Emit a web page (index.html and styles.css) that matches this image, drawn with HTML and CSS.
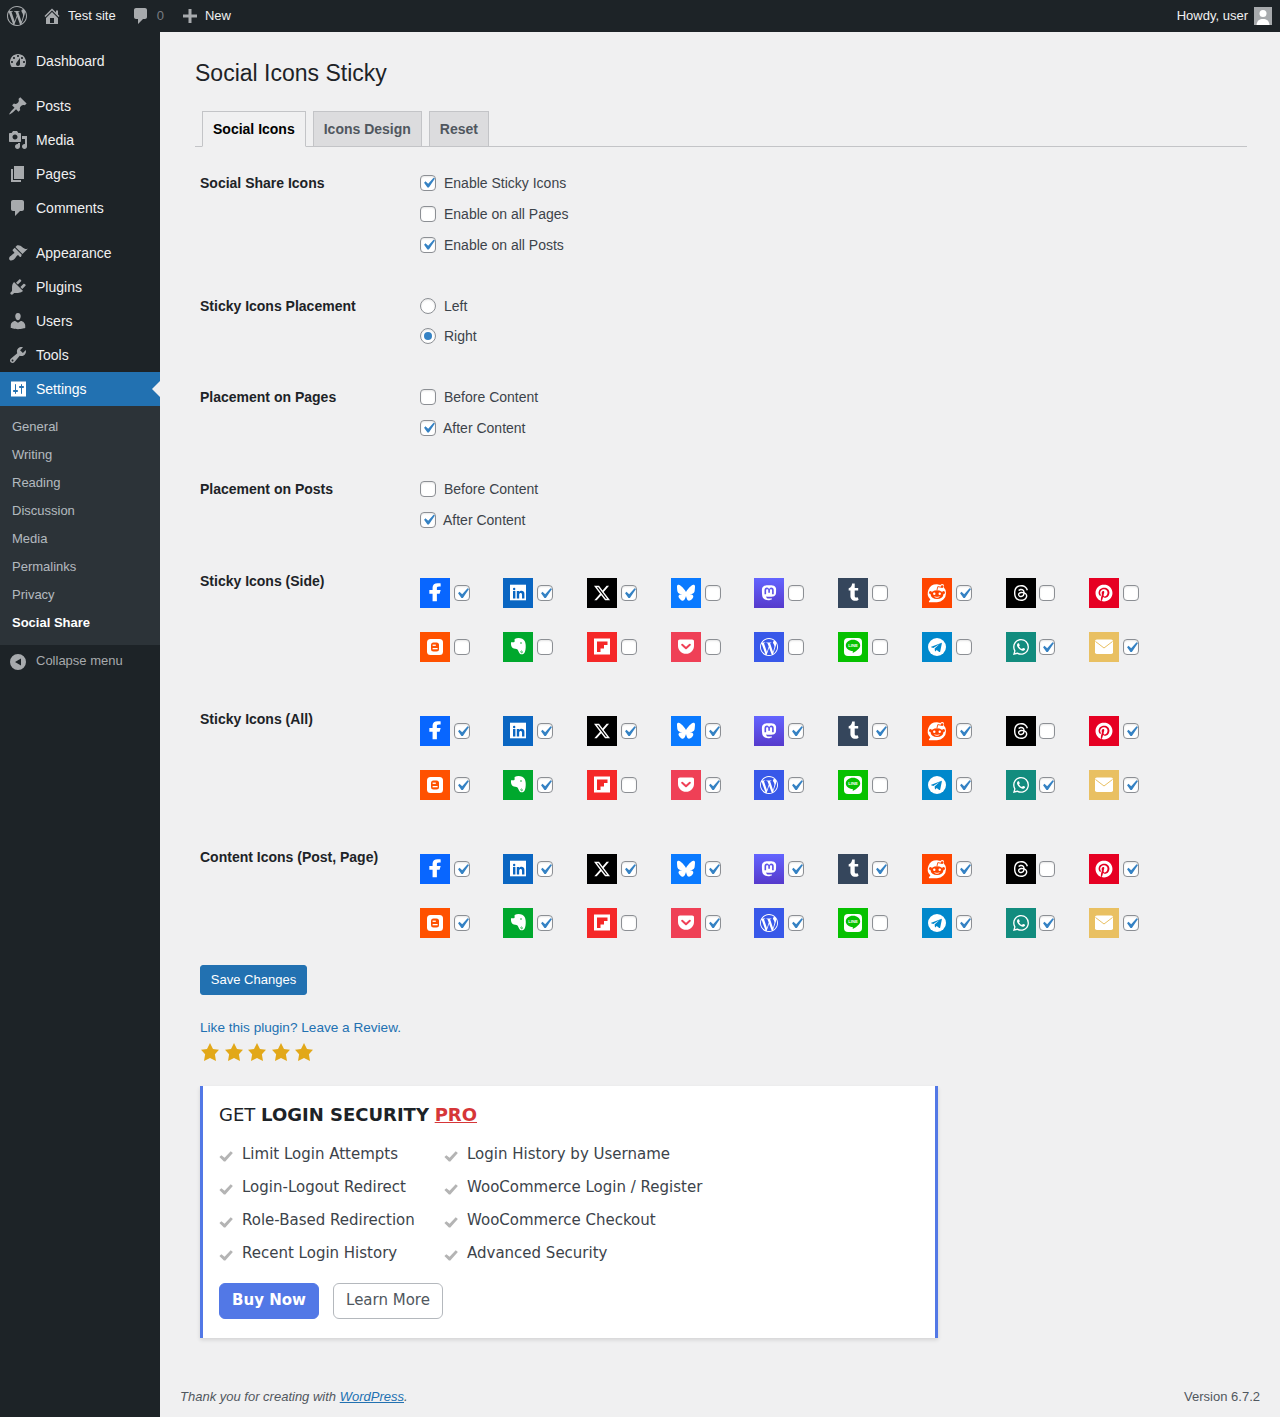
FILE: index.html
```html
<!DOCTYPE html>
<html lang="en">
<head>
    <meta charset="UTF-8">
    <meta name="viewport" content="width=device-width, initial-scale=1.0">
    <title>Social Icons Sticky</title>
    <link rel="stylesheet" href="styles.css">
</head>
<body>
    <svg class="sprite" aria-hidden="true">
        <defs>
            <linearGradient id="mastodonBg" x1="0" y1="0" x2="0" y2="1">
                <stop offset="0" stop-color="#6364ff"/>
                <stop offset="1" stop-color="#563acc"/>
            </linearGradient>
            <path id="wpLogo" d="M21.469 6.825c.84 1.537 1.318 3.3 1.318 5.175 0 3.979-2.156 7.456-5.363 9.325l3.295-9.527c.615-1.54.82-2.771.82-3.864 0-.405-.026-.78-.07-1.11m-7.981.105c.647-.03 1.232-.105 1.232-.105.582-.075.514-.93-.067-.899 0 0-1.755.135-2.88.135-1.064 0-2.85-.15-2.85-.15-.585-.03-.661.855-.075.885 0 0 .54.061 1.125.09l1.68 4.605-2.37 7.08L5.354 6.9c.649-.03 1.234-.1 1.234-.1.585-.075.516-.93-.065-.896 0 0-1.746.138-2.874.138-.2 0-.438-.008-.69-.015C4.911 3.15 8.235 1.215 12 1.215c2.809 0 5.365 1.072 7.286 2.833-.046-.003-.091-.009-.141-.009-1.06 0-1.812.923-1.812 1.914 0 .89.513 1.643 1.06 2.531.411.72.89 1.643.89 2.977 0 .915-.354 1.994-.821 3.479l-1.075 3.585-3.9-11.61.001.014zM12 22.784c-1.059 0-2.081-.153-3.048-.437l3.237-9.406 3.315 9.087c.024.053.05.101.078.149-1.12.393-2.325.609-3.582.609M1.211 12c0-1.564.336-3.05.935-4.39L7.29 21.709C3.694 19.96 1.212 16.271 1.211 12M12 0C5.385 0 0 5.385 0 12s5.385 12 12 12 12-5.385 12-12S18.615 0 12 0"/>
        </defs>
        <symbol id="i-facebook" viewBox="0 0 30 30">
            <rect width="30" height="30" fill="#0866ff"/>
            <path fill="#fff" transform="translate(1.77 3.5) scale(1.08 .9)" d="M14 13.5h2.5l1-4H14v-2c0-1.03 0-2 2-2h1.5V2.14c-.326-.043-1.557-.14-2.857-.14C11.928 2 10 3.657 10 6.7v2.8H7v4h3V22h4v-8.5z"/>
        </symbol>
        <symbol id="i-linkedin" viewBox="0 0 30 30">
            <rect width="30" height="30" fill="#0a66c2"/>
            <rect x="7" y="6.7" width="16" height="15.6" fill="#fff"/>
            <path fill="#0a66c2" transform="translate(8.2 8) scale(.6)" d="M6.94 5a2 2 0 1 1-4-.002 2 2 0 0 1 4 .002zM7 8.48H3V21h4V8.48zm6.32 0H9.34V21h3.94v-6.57c0-3.66 4.77-4 4.77 0V21H22v-7.93c0-6.17-7.06-5.94-8.72-2.91l.04-1.68z"/>
        </symbol>
        <symbol id="i-x" viewBox="0 0 30 30">
            <rect width="30" height="30" fill="#000"/>
            <path fill="#fff" transform="translate(7 7) scale(.667)" d="M18.901 1.153h3.68l-8.04 9.19L24 22.846h-7.406l-5.8-7.584-6.638 7.584H.474l8.6-9.83L0 1.154h7.594l5.243 6.932ZM17.61 20.644h2.039L6.486 3.24H4.298Z"/>
        </symbol>
        <symbol id="i-bluesky" viewBox="0 0 30 30">
            <rect width="30" height="30" fill="#0a7aff"/>
            <path fill="#fff" transform="translate(6 5.8) scale(.75)" d="M12 10.8c-1.087-2.114-4.046-6.053-6.798-7.995C2.566.944 1.561 1.266.902 1.565.139 1.908 0 3.08 0 3.768c0 .69.378 5.65.624 6.479.815 2.736 3.713 3.66 6.383 3.364.136-.02.275-.039.415-.056-.138.022-.276.04-.415.056-3.912.58-7.387 2.005-2.83 7.078 5.013 5.19 6.87-1.113 7.823-4.308.953 3.195 2.05 9.271 7.733 4.308 4.267-4.308 1.172-6.498-2.74-7.078a8.741 8.741 0 0 1-.415-.056c.14.017.279.036.415.056 2.67.297 5.568-.628 6.383-3.364.246-.828.624-5.79.624-6.478 0-.69-.139-1.861-.902-2.206-.659-.298-1.664-.62-4.3 1.24C16.046 4.748 13.087 8.687 12 10.8Z"/>
        </symbol>
        <symbol id="i-mastodon" viewBox="0 0 30 30">
            <rect width="30" height="30" fill="url(#mastodonBg)"/>
            <path fill="#fff" transform="translate(7.5 7.2) scale(.625)" d="M23.268 5.313c-.35-2.578-2.617-4.61-5.304-5.004C17.51.242 15.792 0 11.813 0h-.03c-3.98 0-4.835.242-5.288.309C3.882.692 1.496 2.518.917 5.127.64 6.412.61 7.837.661 9.143c.074 1.874.088 3.745.26 5.611.118 1.24.325 2.47.62 3.68.55 2.237 2.777 4.098 4.96 4.857 2.336.792 4.849.923 7.256.38.265-.061.527-.132.786-.213.585-.184 1.27-.39 1.774-.753a.057.057 0 0 0 .023-.043v-1.809a.052.052 0 0 0-.02-.041.053.053 0 0 0-.046-.01 20.282 20.282 0 0 1-4.709.545c-2.73 0-3.463-1.284-3.674-1.818a5.593 5.593 0 0 1-.319-1.433.053.053 0 0 1 .066-.054c1.517.363 3.072.546 4.632.546.376 0 .75 0 1.125-.01 1.57-.044 3.224-.124 4.768-.422.038-.008.077-.015.11-.024 2.435-.464 4.753-1.92 4.989-5.604.008-.145.03-1.52.03-1.67.002-.512.167-3.63-.024-5.545zm-3.748 9.195h-2.561V8.29c0-1.309-.55-1.976-1.67-1.976-1.23 0-1.846.79-1.846 2.35v3.403h-2.546V8.663c0-1.56-.617-2.35-1.848-2.35-1.112 0-1.668.668-1.67 1.977v6.218H4.822V8.102c0-1.31.337-2.35 1.011-3.12.696-.77 1.608-1.164 2.74-1.164 1.311 0 2.302.5 2.962 1.498l.638 1.06.638-1.06c.66-.999 1.65-1.498 2.96-1.498 1.13 0 2.043.395 2.74 1.164.675.77 1.012 1.81 1.012 3.12z"/>
        </symbol>
        <symbol id="i-tumblr" viewBox="0 0 30 30">
            <rect width="30" height="30" fill="#35465c"/>
            <path fill="#fff" transform="translate(7 5.5) scale(.72)" d="M14.563 24c-5.093 0-7.031-3.756-7.031-6.411V9.747H5.116V6.648c3.63-1.313 4.512-4.596 4.71-6.469C9.84.051 9.941 0 9.999 0h3.517v6.114h4.801v3.633h-4.82v7.47c.016 1.001.375 2.371 2.207 2.371h.09c.631-.02 1.486-.205 1.936-.419l1.156 3.425c-.436.636-2.4 1.374-4.156 1.404h-.178l.011.002z"/>
        </symbol>
        <symbol id="i-reddit" viewBox="0 0 30 30">
            <rect width="30" height="30" fill="#ff4500"/>
            <path fill="#fff" d="M15 6.2a9 9 0 0 1 0 18H7.6c-.7 0-1-.8-.5-1.3l1.3-1.3A9 9 0 0 1 15 6.2z"/>
            <circle cx="20.2" cy="8" r="1.9" fill="#fff"/>
            <ellipse cx="15" cy="16.6" rx="6.4" ry="4.4" fill="#ff4500"/>
            <circle cx="8.5" cy="14.6" r="1.5" fill="#ff4500"/>
            <circle cx="21.5" cy="14.6" r="1.5" fill="#ff4500"/>
            <path d="M15 12l.8-3.4 4 .8" fill="none" stroke="#ff4500" stroke-width=".9"/>
            <circle cx="20.2" cy="8.6" r="1.3" fill="#ff4500"/>
            <circle cx="12.3" cy="15.8" r="1.2" fill="#fff"/>
            <circle cx="17.7" cy="15.8" r="1.2" fill="#fff"/>
            <path d="M12.6 18.6c1.4 1 3.4 1 4.8 0" fill="none" stroke="#fff" stroke-width=".9"/>
        </symbol>
        <symbol id="i-threads" viewBox="0 0 30 30">
            <rect width="30" height="30" fill="#000"/>
            <path fill="#fff" transform="translate(7 7) scale(.667)" d="M12.186 24h-.007c-3.581-.024-6.334-1.205-8.184-3.509C2.35 18.44 1.5 15.586 1.472 12.01v-.017c.03-3.579.879-6.43 2.525-8.482C5.845 1.205 8.6.024 12.18 0h.014c2.746.02 5.043.725 6.826 2.098 1.677 1.29 2.858 3.13 3.509 5.467l-2.04.569c-1.104-3.96-3.898-5.984-8.304-6.015-2.91.022-5.11.936-6.54 2.717C4.307 6.504 3.616 8.914 3.589 12c.027 3.086.718 5.496 2.057 7.164 1.43 1.783 3.631 2.698 6.54 2.717 2.623-.02 4.358-.631 5.8-2.045 1.647-1.613 1.618-3.593 1.09-4.798-.31-.71-.873-1.3-1.634-1.75-.192 1.352-.622 2.446-1.284 3.272-.886 1.102-2.14 1.704-3.73 1.79-1.202.065-2.361-.218-3.259-.801-1.063-.689-1.685-1.74-1.752-2.964-.065-1.19.408-2.285 1.33-3.082.88-.76 2.119-1.207 3.583-1.291a13.853 13.853 0 0 1 3.02.142c-.126-.742-.375-1.332-.75-1.757-.513-.586-1.308-.883-2.359-.89h-.029c-.844 0-1.992.232-2.721 1.32L7.734 7.847c.98-1.454 2.568-2.256 4.478-2.256h.044c3.194.02 5.097 1.975 5.287 5.388.108.046.216.094.321.142 1.49.7 2.58 1.761 3.154 3.07.797 1.82.871 4.79-1.548 7.158-1.85 1.81-4.094 2.628-7.277 2.65Zm1.003-11.69c-.242 0-.487.007-.739.021-1.836.103-2.98.946-2.916 2.143.067 1.256 1.452 1.839 2.784 1.767 1.224-.065 2.818-.543 3.086-3.71a10.5 10.5 0 0 0-2.215-.221z"/>
        </symbol>
        <symbol id="i-pinterest" viewBox="0 0 30 30">
            <rect width="30" height="30" fill="#e60023"/>
            <path fill="#fff" transform="translate(6.5 6.5) scale(.708)" d="M12.017 0C5.396 0 .029 5.367.029 11.987c0 5.079 3.158 9.417 7.618 11.162-.105-.949-.199-2.403.041-3.439.219-.937 1.406-5.957 1.406-5.957s-.359-.72-.359-1.781c0-1.663.967-2.911 2.168-2.911 1.024 0 1.518.769 1.518 1.688 0 1.029-.653 2.567-.992 3.992-.285 1.193.6 2.165 1.775 2.165 2.128 0 3.768-2.245 3.768-5.487 0-2.861-2.063-4.869-5.008-4.869-3.41 0-5.409 2.562-5.409 5.199 0 1.033.394 2.143.889 2.741.099.12.112.225.085.345-.09.375-.293 1.199-.334 1.363-.053.225-.172.271-.401.165-1.495-.69-2.433-2.878-2.433-4.646 0-3.776 2.748-7.252 7.92-7.252 4.158 0 7.392 2.967 7.392 6.923 0 4.135-2.607 7.462-6.233 7.462-1.214 0-2.354-.629-2.758-1.379l-.749 2.848c-.269 1.045-1.004 2.352-1.498 3.146 1.123.345 2.306.535 3.55.535 6.607 0 11.985-5.365 11.985-11.987C23.97 5.39 18.592.026 11.985.026L12.017 0z"/>
        </symbol>
        <symbol id="i-blogger" viewBox="0 0 30 30">
            <rect width="30" height="30" fill="#ff5100"/>
            <rect x="7" y="7" width="16" height="16" rx="3.5" fill="#fff"/>
            <rect x="11" y="10.5" width="8" height="9" rx="2.5" fill="#ff5100"/>
            <rect x="12.6" y="12.6" width="3.2" height="1.3" fill="#fff"/>
            <rect x="12.6" y="16" width="5" height="1.3" fill="#fff"/>
        </symbol>
        <symbol id="i-evernote" viewBox="0 0 30 30">
            <rect width="30" height="30" fill="#00a82d"/>
            <path fill="#fff" d="M11.6 6.9C14 5.8 17 5.9 19.2 6.700c2.100.8 3.300 3.200 3.500 6.300.2 3.200-.3 6.500-1.300 8-.9 1.400-3 1.600-4.200.9-1.300-.8-1.500-2.900-2.700-4.400-1-1.100-3.400-.9-4.800-1.600C8.300 15 7.800 12.500 8 10.200h2.800c.5 0 .8-.3.8-.8z"/>
            <path d="M19.500 19.500c-.6-.9-2-.5-1.800.5.2.8 1.300 1 2 .3" fill="none" stroke="#00a82d" stroke-width=".8"/>
            <circle cx="18" cy="11" r=".8" fill="#00a82d"/>
        </symbol>
        <symbol id="i-flipboard" viewBox="0 0 30 30">
            <rect width="30" height="30" fill="#f52828"/>
            <rect x="7" y="6.5" width="16" height="16" fill="#fff"/>
            <path fill="#f52828" d="M10 9.5h10.500V13H17v3.500h-3.500V20H10z"/>
        </symbol>
        <symbol id="i-pocket" viewBox="0 0 30 30">
            <rect width="30" height="30" fill="#ef4056"/>
            <path fill="#fff" d="M8.8 7.5h12.400c1 0 1.800.8 1.800 1.800v4.600c0 4.300-3.600 7.800-8 7.800s-8-3.500-8-7.800V9.300c0-1 .8-1.800 1.800-1.800z"/>
            <path d="M11.200 12.700l3.800 3.500 3.800-3.500" fill="none" stroke="#ef4056" stroke-width="2" stroke-linecap="round" stroke-linejoin="round"/>
        </symbol>
        <symbol id="i-wordpress" viewBox="0 0 30 30">
            <rect width="30" height="30" fill="#3858e9"/>
            <use href="#wpLogo" fill="#fff" transform="translate(6 6) scale(.75)"/>
        </symbol>
        <symbol id="i-line" viewBox="0 0 30 30">
            <rect width="30" height="30" fill="#06c100"/>
            <rect x="6" y="6" width="18" height="18" rx="4" fill="#fff"/>
            <path fill="#06c100" d="M15 7.8c4 0 7.200 2.500 7.200 5.600 0 2.500-3.300 5.300-7 7.400-.5.2-.6-.2-.5-.6l.1-1.200C10.800 18.800 7.800 16.400 7.800 13.400c0-3.100 3.200-5.600 7.200-5.600z"/>
        </symbol>
        <symbol id="i-telegram" viewBox="0 0 30 30">
            <rect width="30" height="30" fill="#0088cc"/>
            <circle cx="15" cy="15" r="9" fill="#fff"/>
            <path fill="#0088cc" d="M9.3 14.800l9.800-3.900c.5-.2.9.1.7.8l-1.600 7.800c-.1.6-.5.7-1 .4l-2.500-1.800-1.200 1.200c-.2.2-.3.2-.5 0l-.4-2.700 5-4.600-6.300 4-2.100-.7c-.5-.2-.5-.4.1-.5z"/>
        </symbol>
        <symbol id="i-whatsapp" viewBox="0 0 30 30">
            <rect width="30" height="30" fill="#128c7e"/>
            <path fill="#fff" transform="translate(7 7) scale(.667)" d="M17.472 14.382c-.297-.149-1.758-.867-2.03-.967-.273-.099-.471-.148-.67.15-.197.297-.767.966-.94 1.164-.173.199-.347.223-.644.075-.297-.15-1.255-.463-2.39-1.475-.883-.788-1.48-1.761-1.653-2.059-.173-.297-.018-.458.13-.606.134-.133.298-.347.446-.52.149-.174.198-.298.298-.497.099-.198.05-.371-.025-.52-.075-.149-.669-1.612-.916-2.207-.242-.579-.487-.5-.669-.51-.173-.008-.371-.01-.57-.01-.198 0-.52.074-.792.372-.272.297-1.04 1.016-1.04 2.479 0 1.462 1.065 2.875 1.213 3.074.149.198 2.096 3.2 5.077 4.487.709.306 1.262.489 1.694.625.712.227 1.36.195 1.871.118.571-.085 1.758-.719 2.006-1.413.248-.694.248-1.289.173-1.413-.074-.124-.272-.198-.57-.347m-5.421 7.403h-.004a9.87 9.87 0 01-5.031-1.378l-.361-.214-3.741.982.998-3.648-.235-.374a9.86 9.86 0 01-1.51-5.26c.001-5.45 4.436-9.884 9.888-9.884 2.64 0 5.122 1.03 6.988 2.898a9.825 9.825 0 012.893 6.994c-.003 5.45-4.437 9.884-9.885 9.884m8.413-18.297A11.815 11.815 0 0012.05 0C5.495 0 .16 5.335.157 11.892c0 2.096.547 4.142 1.588 5.945L.057 24l6.305-1.654a11.882 11.882 0 005.683 1.448h.005c6.554 0 11.89-5.335 11.893-11.893a11.821 11.821 0 00-3.48-8.413z"/>
        </symbol>
        <symbol id="i-mail" viewBox="0 0 30 30">
            <rect width="30" height="30" fill="#e9c062"/>
            <rect x="6" y="7.5" width="18" height="14.5" rx="1.8" fill="#fff"/>
            <path d="M6.5 9.500l8.500 6.500 8.500-6.500" fill="none" stroke="#e9c062" stroke-width="1"/>
        </symbol>
        <symbol id="d-dashboard" viewBox="0 0 20 20"><path fill-rule="evenodd" d="M3.76 16h12.48c1.1-1.37 1.76-3.11 1.76-5 0-4.42-3.58-8-8-8s-8 3.58-8 8c0 1.89.66 3.63 1.76 5zM10 4c.55 0 1 .45 1 1s-.45 1-1 1-1-.45-1-1 .45-1 1-1zM6 6c.55 0 1 .45 1 1s-.45 1-1 1-1-.45-1-1 .45-1 1-1zm8 0c.55 0 1 .45 1 1s-.45 1-1 1-1-.45-1-1 .45-1 1-1zm-5.37 5.55L12 7v6c0 1.1-.9 2-2 2s-2-.9-2-2c0-.57.24-1.08.63-1.45zM4 10c.55 0 1 .45 1 1s-.45 1-1 1-1-.45-1-1 .45-1 1-1zm12 0c.55 0 1 .45 1 1s-.45 1-1 1-1-.45-1-1 .45-1 1-1z"/></symbol>
        <symbol id="d-pin" viewBox="0 0 20 20"><path d="M10.44 3.02l1.82-1.82 6.36 6.35-1.83 1.82c-1.05-.68-2.48-.57-3.41.36l-.75.75c-.92.93-1.04 2.35-.35 3.41l-1.83 1.82-2.41-2.41-2.8 2.79c-.42.42-3.38 2.71-3.8 2.29s1.86-3.39 2.28-3.81l2.79-2.79L4.1 9.36l1.83-1.82c1.05.69 2.48.57 3.4-.36l.75-.75c.93-.92 1.05-2.35.36-3.41z"/></symbol>
        <symbol id="d-media" viewBox="0 0 20 20"><path fill-rule="evenodd" d="M13 11V4c0-.55-.45-1-1-1h-1.67L9 1H5L3.67 3H2c-.55 0-1 .45-1 1v7c0 .55.45 1 1 1h10c.55 0 1-.45 1-1zM7 4.5c1.38 0 2.5 1.12 2.5 2.5S8.38 9.5 7 9.5 4.5 8.38 4.5 7 5.62 4.5 7 4.5zM14 6h5v10.5c0 1.38-1.12 2.5-2.5 2.5S14 17.88 14 16.5s1.12-2.5 2.5-2.5c.17 0 .34.02.5.05V9h-3V6zm-4 8.05V13h2v3.5c0 1.38-1.12 2.5-2.5 2.5S7 17.88 7 16.5 8.12 14 9.5 14c.17 0 .34.02.5.05z"/></symbol>
        <symbol id="d-page" viewBox="0 0 20 20"><path d="M6 15V2h10v13H6zm-1 1h8v2H3V5h2v11z"/></symbol>
        <symbol id="d-comment" viewBox="0 0 20 20"><path d="M5 2h9c1.1 0 2 .9 2 2v7c0 1.1-.9 2-2 2h-2l-5 5v-5H5c-1.1 0-2-.9-2-2V4c0-1.1.9-2 2-2z"/></symbol>
        <symbol id="d-brush" viewBox="0 0 20 20"><path d="M14.48 11.06L7.41 3.99l1.5-1.5c.5-.56 2.3-.47 3.51.32 1.21.8 1.43 1.28 2.91 2.1 1.18.64 2.45 1.26 4.45.85zm-.71.71L6.7 4.7 4.93 6.47c-.39.39-.39 1.02 0 1.41l1.06 1.06c.39.39.39 1.03 0 1.42-.6.6-1.43 1.11-2.21 1.69-.35.26-.7.53-1.01.84C1.43 13.23.39 15.61 1.67 16.89c1.28 1.28 3.66.24 4.98-1.1.31-.31.58-.66.84-1.01.58-.78 1.09-1.61 1.69-2.21.39-.39 1.03-.39 1.42 0l1.06 1.06c.39.39 1.02.39 1.41 0z"/></symbol>
        <symbol id="d-plugin" viewBox="0 0 20 20"><path d="M13.11 4.36L9.87 7.6 8 5.73l3.24-3.24c.35-.34 1.05-.2 1.56.32.52.51.66 1.21.31 1.55zm-8 1.77l.91-1.12 9.01 9.01-1.19.84c-.71.71-2.63 1.16-3.82 1.16H6.14L4.9 17.26c-.59.59-1.54.59-2.12 0-.59-.58-.59-1.53 0-2.12l1.24-1.24v-3.88c0-1.13.4-3.19 1.09-3.89zm7.26 3.97l3.24-3.24c.34-.35 1.04-.21 1.55.31.52.51.66 1.21.31 1.55l-3.24 3.25z"/></symbol>
        <symbol id="d-users" viewBox="0 0 20 20"><path d="M10 9.25c-2.27 0-2.73-3.44-2.73-3.44C7 4.02 7.82 2 9.97 2c2.16 0 2.98 2.02 2.71 3.81 0 0-.41 3.44-2.68 3.44zm0 2.57L12.72 10c2.39 0 4.52 2.33 4.52 4.53v2.49s-3.65 1.13-7.24 1.13c-3.65 0-7.24-1.13-7.24-1.13v-2.49c0-2.25 1.94-4.48 4.47-4.48z"/></symbol>
        <symbol id="d-tools" viewBox="0 0 20 20"><path fill-rule="evenodd" d="M16.68 9.77c-1.34 1.34-3.3 1.67-4.95.99l-5.41 6.52c-.99.99-2.59.99-3.58 0s-.99-2.59 0-3.57l6.52-5.42c-.68-1.65-.35-3.61.99-4.95 1.28-1.28 3.12-1.62 4.72-1.06l-2.89 2.89 2.82 2.82 2.86-2.87c.53 1.58.18 3.39-1.08 4.65zM3.81 16.21c.4.39 1.04.39 1.43 0 .4-.4.4-1.04 0-1.43-.39-.4-1.03-.4-1.43 0-.39.39-.39 1.03 0 1.43z"/></symbol>
        <symbol id="d-settings" viewBox="0 0 20 20"><path fill-rule="evenodd" d="M18 17.5V2.5H3v15zM8 11h1c.55 0 1 .45 1 1s-.45 1-1 1H8v1.5c0 .28-.22.5-.5.5s-.5-.22-.5-.5V13H6c-.55 0-1-.45-1-1s.45-1 1-1h1V5.5c0-.28.22-.5.5-.5s.5.22.5.5V11zm5-2h-1c-.55 0-1-.45-1-1s.45-1 1-1h1V5.5c0-.28.22-.5.5-.5s.5.22.5.5V7h1c.55 0 1 .45 1 1s-.45 1-1 1h-1v5.5c0 .28-.22.5-.5.5s-.5-.22-.5-.5V9z"/></symbol>
        <symbol id="d-home" viewBox="0 0 20 20"><path fill-rule="evenodd" d="M16 8.5l1.53 1.53-1.06 1.06L10 4.62l-6.47 6.47-1.06-1.06L10 2.5l4 4v-2h2v4zm-6-2.46l6 5.99V18H4v-5.97zM12 17v-5H8v5h4z"/></symbol>
        <symbol id="d-plus" viewBox="0 0 20 20"><path d="M17 8.5v3h-5.500V17h-3v-5.500H3v-3h5.500V3h3v5.500z"/></symbol>
        <symbol id="d-collapse" viewBox="0 0 20 20"><path fill-rule="evenodd" d="M10 2a8 8 0 1 1 0 16 8 8 0 0 1 0-16zm3 4.500L7 10l6 3.500z"/></symbol>
        <symbol id="d-star" viewBox="0 0 20 20"><path d="M10 1l3 6 6 .75-4.12 4.62L16 19l-6-3-6 3 1.13-6.63L1 7.75 7 7z"/></symbol>
        <symbol id="d-check" viewBox="0 0 16 14"><path d="M13.5 1.5L16 3.4 7.2 13.5H5.6L.3 8.3l2.3-2.1 3.7 2.9z"/></symbol>
    </svg>

    <header class="adminbar">
        <svg class="bar-logo" viewBox="0 0 24 24"><use href="#wpLogo"/></svg>
        <a class="bar-item bar-site"><svg class="bar-icon"><use href="#d-home"/></svg>Test site</a>
        <a class="bar-item bar-comments"><svg class="bar-icon"><use href="#d-comment"/></svg><span class="bar-count">0</span></a>
        <a class="bar-item bar-new"><svg class="bar-icon"><use href="#d-plus"/></svg>New</a>
        <a class="bar-account">Howdy, user
            <span class="avatar">
                <svg viewBox="0 0 18 18"><circle cx="9" cy="6.5" r="3.5"/><path d="M2.5 18c.5-4.500 3-6 6.500-6s6 1.500 6.500 6z"/></svg>
            </span>
        </a>
    </header>

    <div class="layout">
        <nav class="sidebar">
            <ul class="menu">
                <li class="menu-item"><svg><use href="#d-dashboard"/></svg>Dashboard</li>
                <li class="menu-item menu-gap"><svg><use href="#d-pin"/></svg>Posts</li>
                <li class="menu-item"><svg><use href="#d-media"/></svg>Media</li>
                <li class="menu-item"><svg><use href="#d-page"/></svg>Pages</li>
                <li class="menu-item"><svg><use href="#d-comment"/></svg>Comments</li>
                <li class="menu-item menu-gap"><svg><use href="#d-brush"/></svg>Appearance</li>
                <li class="menu-item"><svg><use href="#d-plugin"/></svg>Plugins</li>
                <li class="menu-item"><svg><use href="#d-users"/></svg>Users</li>
                <li class="menu-item"><svg><use href="#d-tools"/></svg>Tools</li>
                <li class="menu-item current"><svg><use href="#d-settings"/></svg>Settings</li>
            </ul>
            <ul class="submenu">
                <li>General</li>
                <li>Writing</li>
                <li>Reading</li>
                <li>Discussion</li>
                <li>Media</li>
                <li>Permalinks</li>
                <li>Privacy</li>
                <li class="current">Social Share</li>
            </ul>
            <div class="collapse"><svg><use href="#d-collapse"/></svg>Collapse menu</div>
        </nav>

        <div class="content">
            <main class="wrap">
                <h1>Social Icons Sticky</h1>
                <div class="tabs">
                    <a class="tab active">Social Icons</a>
                    <a class="tab">Icons Design</a>
                    <a class="tab">Reset</a>
                </div>

                <form class="settings">
                    <div class="form-row">
                        <div class="form-label">Social Share Icons</div>
                        <div class="options">
                            <label class="option"><input type="checkbox" checked>Enable Sticky Icons</label>
                            <label class="option"><input type="checkbox">Enable on all Pages</label>
                            <label class="option"><input type="checkbox" checked>Enable on all Posts</label>
                        </div>
                    </div>
                    <div class="form-row">
                        <div class="form-label">Sticky Icons Placement</div>
                        <div class="options radio-options">
                            <label class="option radio-option"><input type="radio" name="placement">Left</label>
                            <label class="option radio-option"><input type="radio" name="placement" checked>Right</label>
                        </div>
                    </div>
                    <div class="form-row">
                        <div class="form-label">Placement on Pages</div>
                        <div class="options">
                            <label class="option"><input type="checkbox">Before Content</label>
                            <label class="option tight"><input type="checkbox" checked>After Content</label>
                        </div>
                    </div>
                    <div class="form-row">
                        <div class="form-label">Placement on Posts</div>
                        <div class="options">
                            <label class="option"><input type="checkbox">Before Content</label>
                            <label class="option tight"><input type="checkbox" checked>After Content</label>
                        </div>
                    </div>

                    <div class="form-row">
                        <div class="form-label">Sticky Icons (Side)</div>
                        <div class="icon-grid">
                            <label class="icon-cell"><svg class="icon"><use href="#i-facebook"/></svg><input type="checkbox" checked></label>
                            <label class="icon-cell"><svg class="icon"><use href="#i-linkedin"/></svg><input type="checkbox" checked></label>
                            <label class="icon-cell"><svg class="icon"><use href="#i-x"/></svg><input type="checkbox" checked></label>
                            <label class="icon-cell"><svg class="icon"><use href="#i-bluesky"/></svg><input type="checkbox"></label>
                            <label class="icon-cell"><svg class="icon"><use href="#i-mastodon"/></svg><input type="checkbox"></label>
                            <label class="icon-cell"><svg class="icon"><use href="#i-tumblr"/></svg><input type="checkbox"></label>
                            <label class="icon-cell"><svg class="icon"><use href="#i-reddit"/></svg><input type="checkbox" checked></label>
                            <label class="icon-cell"><svg class="icon"><use href="#i-threads"/></svg><input type="checkbox"></label>
                            <label class="icon-cell"><svg class="icon"><use href="#i-pinterest"/></svg><input type="checkbox"></label>
                            <label class="icon-cell"><svg class="icon"><use href="#i-blogger"/></svg><input type="checkbox"></label>
                            <label class="icon-cell"><svg class="icon"><use href="#i-evernote"/></svg><input type="checkbox"></label>
                            <label class="icon-cell"><svg class="icon"><use href="#i-flipboard"/></svg><input type="checkbox"></label>
                            <label class="icon-cell"><svg class="icon"><use href="#i-pocket"/></svg><input type="checkbox"></label>
                            <label class="icon-cell"><svg class="icon"><use href="#i-wordpress"/></svg><input type="checkbox"></label>
                            <label class="icon-cell"><svg class="icon" viewBox="0 0 30 30"><use href="#i-line" width="30" height="30"/><text x="15" y="15" class="line-text">LINE</text></svg><input type="checkbox"></label>
                            <label class="icon-cell"><svg class="icon"><use href="#i-telegram"/></svg><input type="checkbox"></label>
                            <label class="icon-cell"><svg class="icon"><use href="#i-whatsapp"/></svg><input type="checkbox" checked></label>
                            <label class="icon-cell"><svg class="icon"><use href="#i-mail"/></svg><input type="checkbox" checked></label>
                        </div>
                    </div>

                    <div class="form-row">
                        <div class="form-label">Sticky Icons (All)</div>
                        <div class="icon-grid">
                            <label class="icon-cell"><svg class="icon"><use href="#i-facebook"/></svg><input type="checkbox" checked></label>
                            <label class="icon-cell"><svg class="icon"><use href="#i-linkedin"/></svg><input type="checkbox" checked></label>
                            <label class="icon-cell"><svg class="icon"><use href="#i-x"/></svg><input type="checkbox" checked></label>
                            <label class="icon-cell"><svg class="icon"><use href="#i-bluesky"/></svg><input type="checkbox" checked></label>
                            <label class="icon-cell"><svg class="icon"><use href="#i-mastodon"/></svg><input type="checkbox" checked></label>
                            <label class="icon-cell"><svg class="icon"><use href="#i-tumblr"/></svg><input type="checkbox" checked></label>
                            <label class="icon-cell"><svg class="icon"><use href="#i-reddit"/></svg><input type="checkbox" checked></label>
                            <label class="icon-cell"><svg class="icon"><use href="#i-threads"/></svg><input type="checkbox"></label>
                            <label class="icon-cell"><svg class="icon"><use href="#i-pinterest"/></svg><input type="checkbox" checked></label>
                            <label class="icon-cell"><svg class="icon"><use href="#i-blogger"/></svg><input type="checkbox" checked></label>
                            <label class="icon-cell"><svg class="icon"><use href="#i-evernote"/></svg><input type="checkbox" checked></label>
                            <label class="icon-cell"><svg class="icon"><use href="#i-flipboard"/></svg><input type="checkbox"></label>
                            <label class="icon-cell"><svg class="icon"><use href="#i-pocket"/></svg><input type="checkbox" checked></label>
                            <label class="icon-cell"><svg class="icon"><use href="#i-wordpress"/></svg><input type="checkbox" checked></label>
                            <label class="icon-cell"><svg class="icon" viewBox="0 0 30 30"><use href="#i-line" width="30" height="30"/><text x="15" y="15" class="line-text">LINE</text></svg><input type="checkbox"></label>
                            <label class="icon-cell"><svg class="icon"><use href="#i-telegram"/></svg><input type="checkbox" checked></label>
                            <label class="icon-cell"><svg class="icon"><use href="#i-whatsapp"/></svg><input type="checkbox" checked></label>
                            <label class="icon-cell"><svg class="icon"><use href="#i-mail"/></svg><input type="checkbox" checked></label>
                        </div>
                    </div>

                    <div class="form-row">
                        <div class="form-label">Content Icons (Post, Page)</div>
                        <div class="icon-grid">
                            <label class="icon-cell"><svg class="icon"><use href="#i-facebook"/></svg><input type="checkbox" checked></label>
                            <label class="icon-cell"><svg class="icon"><use href="#i-linkedin"/></svg><input type="checkbox" checked></label>
                            <label class="icon-cell"><svg class="icon"><use href="#i-x"/></svg><input type="checkbox" checked></label>
                            <label class="icon-cell"><svg class="icon"><use href="#i-bluesky"/></svg><input type="checkbox" checked></label>
                            <label class="icon-cell"><svg class="icon"><use href="#i-mastodon"/></svg><input type="checkbox" checked></label>
                            <label class="icon-cell"><svg class="icon"><use href="#i-tumblr"/></svg><input type="checkbox" checked></label>
                            <label class="icon-cell"><svg class="icon"><use href="#i-reddit"/></svg><input type="checkbox" checked></label>
                            <label class="icon-cell"><svg class="icon"><use href="#i-threads"/></svg><input type="checkbox"></label>
                            <label class="icon-cell"><svg class="icon"><use href="#i-pinterest"/></svg><input type="checkbox" checked></label>
                            <label class="icon-cell"><svg class="icon"><use href="#i-blogger"/></svg><input type="checkbox" checked></label>
                            <label class="icon-cell"><svg class="icon"><use href="#i-evernote"/></svg><input type="checkbox" checked></label>
                            <label class="icon-cell"><svg class="icon"><use href="#i-flipboard"/></svg><input type="checkbox"></label>
                            <label class="icon-cell"><svg class="icon"><use href="#i-pocket"/></svg><input type="checkbox" checked></label>
                            <label class="icon-cell"><svg class="icon"><use href="#i-wordpress"/></svg><input type="checkbox" checked></label>
                            <label class="icon-cell"><svg class="icon" viewBox="0 0 30 30"><use href="#i-line" width="30" height="30"/><text x="15" y="15" class="line-text">LINE</text></svg><input type="checkbox"></label>
                            <label class="icon-cell"><svg class="icon"><use href="#i-telegram"/></svg><input type="checkbox" checked></label>
                            <label class="icon-cell"><svg class="icon"><use href="#i-whatsapp"/></svg><input type="checkbox" checked></label>
                            <label class="icon-cell"><svg class="icon"><use href="#i-mail"/></svg><input type="checkbox" checked></label>
                        </div>
                    </div>

                    <button type="button" class="save-btn">Save Changes</button>
                </form>

                <a class="review-link">Like this plugin? Leave a Review.</a>
                <div class="stars">
                    <svg><use href="#d-star"/></svg>
                    <svg><use href="#d-star"/></svg>
                    <svg><use href="#d-star"/></svg>
                    <svg><use href="#d-star"/></svg>
                    <svg><use href="#d-star"/></svg>
                </div>

                <section class="promo">
                    <h2>GET <strong>LOGIN SECURITY</strong> <a class="promo-pro">PRO</a></h2>
                    <ul class="promo-list">
                        <li><svg><use href="#d-check"/></svg>Limit Login Attempts</li>
                        <li><svg><use href="#d-check"/></svg>Login History by Username</li>
                        <li><svg><use href="#d-check"/></svg>Login-Logout Redirect</li>
                        <li><svg><use href="#d-check"/></svg>WooCommerce Login / Register</li>
                        <li><svg><use href="#d-check"/></svg>Role-Based Redirection</li>
                        <li><svg><use href="#d-check"/></svg>WooCommerce Checkout</li>
                        <li><svg><use href="#d-check"/></svg>Recent Login History</li>
                        <li><svg><use href="#d-check"/></svg>Advanced Security</li>
                    </ul>
                    <div class="promo-actions">
                        <a class="buy-btn">Buy Now</a>
                        <a class="learn-btn">Learn More</a>
                    </div>
                </section>
            </main>

            <footer class="footer">
                <em>Thank you for creating with <a>WordPress</a>.</em>
                <span>Version 6.7.2</span>
            </footer>
        </div>
    </div>
</body>
</html>
```

FILE: styles.css
```css
* {
    box-sizing: border-box;
}
html, body {
    height: 100%;
}
body {
    margin: 0;
    display: flex;
    flex-direction: column;
    min-height: 1417px;
    background-color: #f0f0f1;
    color: #3c434a;
    font-family: "Liberation Sans", Arial, sans-serif;
    font-size: 14px;
}
ul {
    list-style: none;
    margin: 0;
    padding: 0;
}
.sprite {
    width: 0;
    height: 0;
    overflow: hidden;
    position: absolute;
}
.line-text {
    fill: #fff;
    font-family: "Liberation Sans", Arial, sans-serif;
    font-size: 4.2px;
    font-weight: 700;
    text-anchor: middle;
}

/* top bar */
.adminbar {
    flex: none;
    height: 32px;
    display: flex;
    align-items: center;
    padding: 0 8px 0 7px;
    background-color: #1d2327;
    color: #f0f0f1;
    font-size: 13px;
}
.bar-logo {
    width: 20px;
    height: 20px;
    fill: #a7aaad;
}
.bar-item {
    display: flex;
    align-items: center;
    padding-bottom: 2px;
}
.bar-icon {
    width: 20px;
    height: 20px;
    margin-top: 2px;
    fill: #a7aaad;
}
.bar-site {
    margin-left: 15px;
}
.bar-site .bar-icon {
    margin-right: 6px;
}
.bar-comments {
    margin-left: 15px;
}
.bar-comments .bar-icon {
    margin-right: 6px;
}
.bar-count {
    color: #787c82;
}
.bar-new {
    margin-left: 16px;
}
.bar-new .bar-icon {
    margin-right: 5px;
}
.bar-account {
    margin-left: auto;
    display: flex;
    align-items: center;
    gap: 6px;
    padding-bottom: 2px;
}
.avatar {
    width: 18px;
    height: 18px;
    display: block;
    margin-top: 2px;
    background-color: #a7aaad;
}
.avatar svg {
    display: block;
    width: 18px;
    height: 18px;
    fill: #fff;
}

.layout {
    flex: 1;
    display: flex;
}

/* sidebar */
.sidebar {
    flex: none;
    width: 160px;
    padding-top: 12px;
    background-color: #1d2327;
    color: #f0f0f1;
}
.menu-item {
    position: relative;
    height: 34px;
    display: flex;
    align-items: center;
    gap: 8px;
    padding-left: 8px;
}
.menu-item svg {
    width: 20px;
    height: 20px;
    fill: #a7aaad;
}
.menu-gap {
    margin-top: 11px;
}
.menu-item.current {
    background-color: #2271b1;
    color: #fff;
}
.menu-item.current svg {
    fill: #fff;
}
.menu-item.current::after {
    content: "";
    position: absolute;
    right: 0;
    top: 9px;
    border: 8px solid transparent;
    border-right-color: #f0f0f1;
    border-left-width: 0;
}
.submenu {
    padding: 7px 0 8px;
    background-color: #2c3338;
    color: rgba(240, 246, 252, 0.7);
    font-size: 13px;
}
.submenu li {
    height: 28px;
    line-height: 28px;
    padding-left: 12px;
}
.submenu .current {
    color: #fff;
    font-weight: 700;
}
.collapse {
    height: 32px;
    display: flex;
    align-items: center;
    gap: 8px;
    padding: 0 0 2px 8px;
    color: #a7aaad;
    font-size: 13px;
}
.collapse svg {
    width: 20px;
    height: 20px;
    margin-top: 4px;
    fill: #a7aaad;
}

/* content */
.content {
    flex: 1;
    min-width: 0;
    display: flex;
    flex-direction: column;
}
.wrap {
    flex: 1;
    padding: 26px 33px 0 35px;
}
h1 {
    margin: 0 0 23px;
    color: #1d2327;
    font-size: 23px;
    font-weight: 400;
    line-height: 30px;
}
.tabs {
    display: flex;
    gap: 7px;
    height: 36px;
    padding-left: 7px;
    border-bottom: 1px solid #c3c4c7;
}
.tab {
    height: 36px;
    padding: 5px 10px;
    border: 1px solid #c3c4c7;
    background-color: #dcdcde;
    color: #50575e;
    font-weight: 700;
    line-height: 24px;
}
.tab.active {
    background-color: #f0f0f1;
    border-bottom-color: #f0f0f1;
    color: #000;
}

/* form */
.settings {
    padding-left: 5px;
    margin-top: 6px;
}
.form-row {
    display: flex;
}
.form-label {
    flex: none;
    width: 220px;
    padding-top: 20px;
    color: #1d2327;
    font-weight: 700;
    line-height: 21px;
}
.options {
    display: flex;
    flex-direction: column;
    padding: 14px 0 16px;
}
.radio-options {
    padding-top: 15px;
}
.option {
    height: 31px;
    display: flex;
    align-items: center;
}
.radio-option {
    height: 30px;
}
input[type="checkbox"], input[type="radio"] {
    appearance: none;
    position: relative;
    flex: none;
    width: 16px;
    height: 16px;
    margin: 0;
    border: 1px solid #8c8f94;
    background-color: #fff;
    box-shadow: inset 0 1px 2px rgba(0, 0, 0, 0.1);
}
input[type="checkbox"] {
    border-radius: 4px;
}
input[type="radio"] {
    border-radius: 50%;
}
input[type="checkbox"]:checked::before {
    content: "";
    position: absolute;
    left: -3px;
    top: -3px;
    width: 21px;
    height: 21px;
    background-color: #3582c4;
    clip-path: polygon(74.15% 24.45%, 80.85% 29.15%, 51.8% 71.05%, 45.1% 71.05%, 28.9% 48.35%, 35.6% 42.1%, 48.45% 54.1%);
}
input[type="radio"]:checked::before {
    content: "";
    position: absolute;
    left: 3px;
    top: 3px;
    width: 8px;
    height: 8px;
    border-radius: 50%;
    background-color: #3582c4;
}
.option input {
    margin-right: 8px;
}
.option.tight input {
    margin-right: 7px;
}
.icon-grid {
    display: grid;
    grid-template-columns: 83px 84px 84px 83px 84px 84px 84px 83px 84px;
    row-gap: 24px;
    padding: 27px 0;
}
.icon-cell {
    display: flex;
    align-items: center;
    gap: 4px;
}
.icon-cell:nth-child(9n+8) {
    gap: 3px;
}
.icon {
    flex: none;
    width: 30px;
    height: 30px;
}
.save-btn {
    display: block;
    height: 30px;
    width: 107px;
    padding: 0 0 2px;
    border: 1px solid #2271b1;
    border-radius: 3px;
    background-color: #2271b1;
    color: #fff;
    font-family: inherit;
    font-size: 13px;
}

/* review */
.review-link {
    display: block;
    margin: 24px 0 0 5px;
    color: #2271b1;
    font-size: 13.6px;
    line-height: 18px;
}
.stars {
    display: flex;
    gap: 3.6px;
    margin: 5px 0 0 5px;
}
.stars svg {
    width: 20px;
    height: 20px;
    fill: #e2a819;
}

/* promo box */
.promo {
    width: 738px;
    margin: 24px 0 0 5px;
    padding: 16px 16px 19px;
    border-left: 3px solid #5278e6;
    border-right: 3px solid #5278e6;
    background-color: #fff;
    box-shadow: 0 2px 4px rgba(0, 0, 0, 0.12);
    font-family: "DejaVu Sans", sans-serif;
}
.promo h2 {
    margin: 0;
    color: #1d2327;
    font-size: 18px;
    font-weight: 400;
    line-height: 26px;
}
.promo-pro {
    color: #d63638;
    font-weight: 700;
    text-decoration: underline;
}
.promo-list {
    display: grid;
    grid-template-columns: 225px 1fr;
    grid-auto-rows: 33px;
    margin-top: 9px;
    color: #3c434a;
    font-size: 15px;
}
.promo-list li {
    display: flex;
    align-items: center;
    gap: 9px;
}
.promo-list svg {
    flex: none;
    width: 14px;
    height: 12px;
    margin-top: 5px;
    fill: #b4b4b4;
}
.promo-actions {
    display: flex;
    gap: 14px;
    margin-top: 14px;
}
.buy-btn, .learn-btn {
    height: 36px;
    line-height: 32px;
    border: 1px solid #5278e6;
    border-radius: 6px;
    font-size: 15px;
    text-align: center;
}
.buy-btn {
    width: 100px;
    background-color: #5278e6;
    color: #fff;
    font-weight: 700;
}
.learn-btn {
    width: 110px;
    border-color: #b4b8bd;
    color: #50575e;
}

/* footer */
.footer {
    display: flex;
    justify-content: space-between;
    padding: 0 20px 11px;
    color: #50575e;
    font-size: 13px;
    line-height: 18px;
}
.footer a {
    color: #2271b1;
    text-decoration: underline;
}
```
